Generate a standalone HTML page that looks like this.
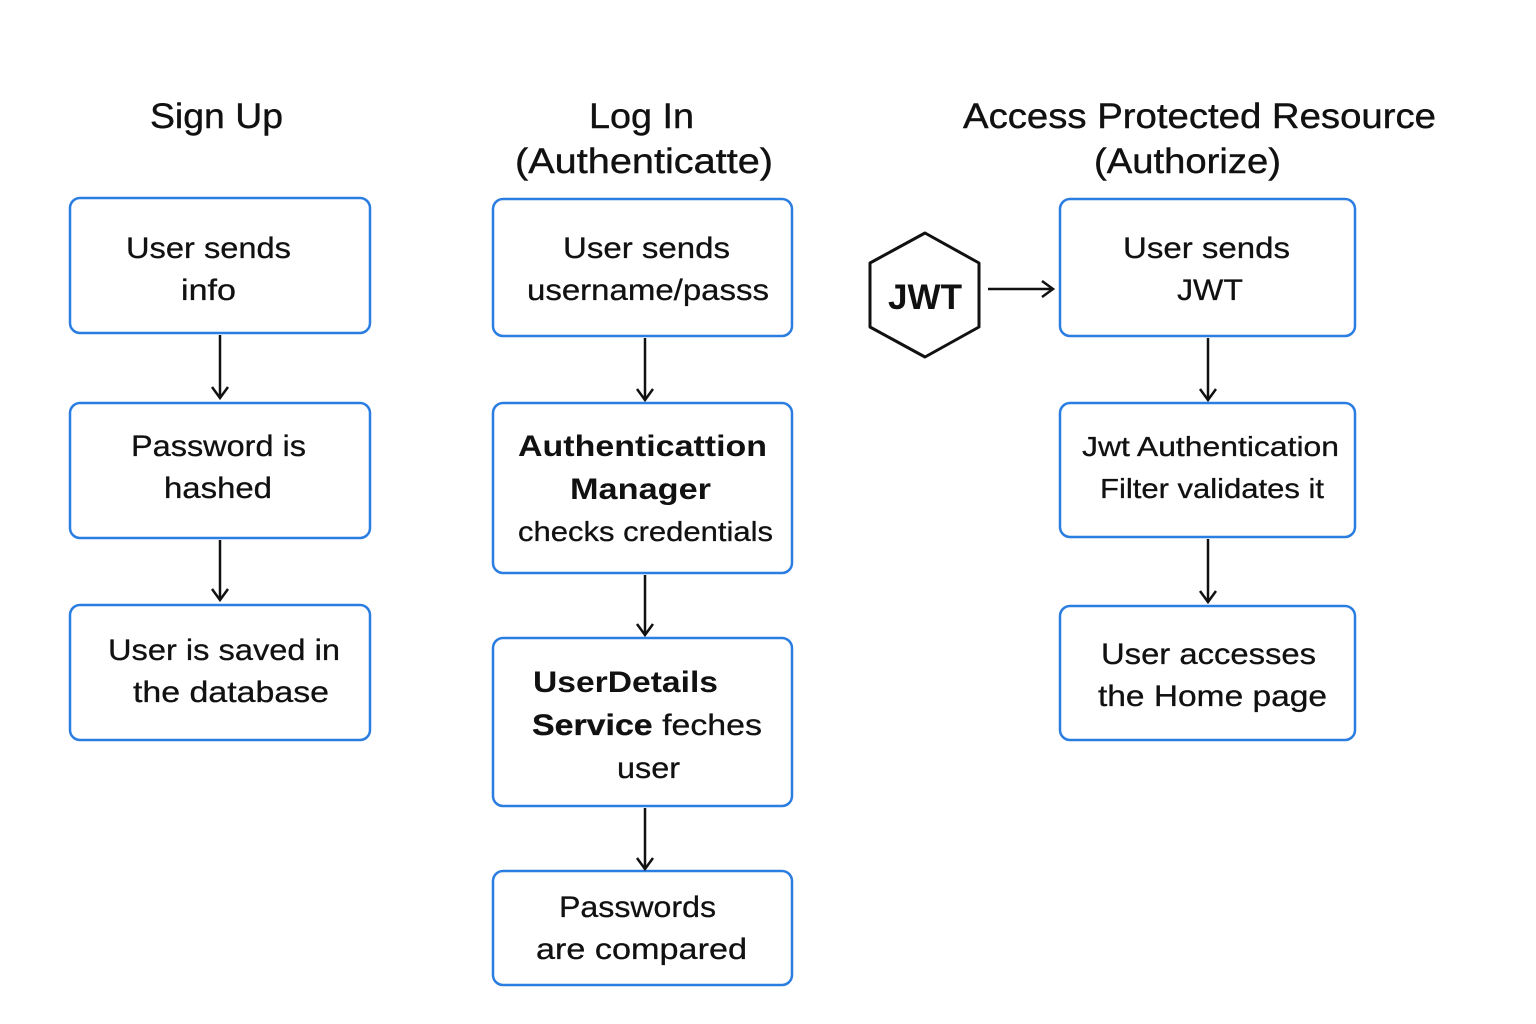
<!DOCTYPE html>
<html><head><meta charset="utf-8"><style>
html,body{margin:0;padding:0;background:#fff;}
svg{display:block;font-family:"Liberation Sans",sans-serif;}
</style></head><body>
<svg width="1536" height="1024" viewBox="0 0 1536 1024" xmlns="http://www.w3.org/2000/svg">
<defs>
<marker id="ah" markerWidth="16" markerHeight="20" refX="13" refY="10" orient="auto" markerUnits="userSpaceOnUse">
<path d="M2,2 L13,10 L2,18" fill="none" stroke="#111" stroke-width="2.5"/>
</marker>
</defs>
<g fill="#111" font-size="35" stroke="#111" stroke-width="0.4">
<text x="150" y="128" textLength="133" lengthAdjust="spacingAndGlyphs">Sign Up</text>
<text x="589" y="128" textLength="105" lengthAdjust="spacingAndGlyphs">Log In</text>
<text x="515" y="173" textLength="258" lengthAdjust="spacingAndGlyphs">(Authenticatte)</text>
<text x="963" y="128" textLength="473" lengthAdjust="spacingAndGlyphs">Access Protected Resource</text>
<text x="1094" y="173" textLength="187" lengthAdjust="spacingAndGlyphs">(Authorize)</text>
</g>
<g fill="none" stroke="#2a7de1" stroke-width="2.5">
<rect x="70" y="198" width="300" height="135" rx="10"/>
<rect x="70" y="403" width="300" height="135" rx="10"/>
<rect x="70" y="605" width="300" height="135" rx="10"/>
<rect x="493" y="199" width="299" height="137" rx="10"/>
<rect x="493" y="403" width="299" height="170" rx="10"/>
<rect x="493" y="638" width="299" height="168" rx="10"/>
<rect x="493" y="871" width="299" height="114" rx="10"/>
<rect x="1060" y="199" width="295" height="137" rx="10"/>
<rect x="1060" y="403" width="295" height="134" rx="10"/>
<rect x="1060" y="606" width="295" height="134" rx="10"/>
</g>
<g stroke="#111" stroke-width="2.5" marker-end="url(#ah)">
<line x1="220" y1="335" x2="220" y2="398"/>
<line x1="220" y1="540" x2="220" y2="600"/>
<line x1="645" y1="338" x2="645" y2="400"/>
<line x1="645" y1="575" x2="645" y2="635"/>
<line x1="645" y1="808" x2="645" y2="869"/>
<line x1="1208" y1="338" x2="1208" y2="400"/>
<line x1="1208" y1="539" x2="1208" y2="602"/>
<line x1="988" y1="289" x2="1053" y2="289"/>
</g>
<path d="M925,233 L979,263 L979,327 L925,357 L870,327 L870,263 Z" fill="none" stroke="#111" stroke-width="3" stroke-linejoin="round"/>
<text x="888" y="309" font-size="35" font-weight="bold" fill="#111" textLength="74" lengthAdjust="spacingAndGlyphs">JWT</text>
<g fill="#111" font-size="30" stroke="#111" stroke-width="0.3">
<text x="126" y="258" textLength="165" lengthAdjust="spacingAndGlyphs">User sends</text>
<text x="181" y="300" textLength="55" lengthAdjust="spacingAndGlyphs">info</text>
<text x="131" y="456" textLength="175" lengthAdjust="spacingAndGlyphs">Password is</text>
<text x="164" y="498" textLength="108" lengthAdjust="spacingAndGlyphs">hashed</text>
<text x="108" y="660" textLength="232" lengthAdjust="spacingAndGlyphs">User is saved in</text>
<text x="133" y="702" textLength="196" lengthAdjust="spacingAndGlyphs">the database</text>
<text x="563" y="258" textLength="167" lengthAdjust="spacingAndGlyphs">User sends</text>
<text x="527" y="300" textLength="242" lengthAdjust="spacingAndGlyphs">username/passs</text>
<text x="518" y="456" font-weight="bold" stroke-width="0" textLength="249" lengthAdjust="spacingAndGlyphs">Authenticattion</text>
<text x="570" y="499" font-weight="bold" stroke-width="0" textLength="141" lengthAdjust="spacingAndGlyphs">Manager</text>
<text x="518" y="541" font-size="28" textLength="255" lengthAdjust="spacingAndGlyphs">checks credentials</text>
<text x="533" y="692" font-weight="bold" stroke-width="0" textLength="185" lengthAdjust="spacingAndGlyphs">UserDetails</text>
<text x="532" y="735" textLength="230" lengthAdjust="spacingAndGlyphs"><tspan font-weight="bold">Service</tspan> feches</text>
<text x="617" y="778" textLength="63" lengthAdjust="spacingAndGlyphs">user</text>
<text x="559" y="917" textLength="157" lengthAdjust="spacingAndGlyphs">Passwords</text>
<text x="536" y="959" textLength="211" lengthAdjust="spacingAndGlyphs">are compared</text>
<text x="1123" y="258" textLength="167" lengthAdjust="spacingAndGlyphs">User sends</text>
<text x="1177" y="300" textLength="66" lengthAdjust="spacingAndGlyphs">JWT</text>
<text x="1082" y="456" font-size="28" textLength="257" lengthAdjust="spacingAndGlyphs">Jwt Authentication</text>
<text x="1100" y="498" font-size="28" textLength="224" lengthAdjust="spacingAndGlyphs">Filter validates it</text>
<text x="1101" y="664" textLength="215" lengthAdjust="spacingAndGlyphs">User accesses</text>
<text x="1098" y="706" textLength="229" lengthAdjust="spacingAndGlyphs">the Home page</text>
</g>
</svg>
</body></html>
